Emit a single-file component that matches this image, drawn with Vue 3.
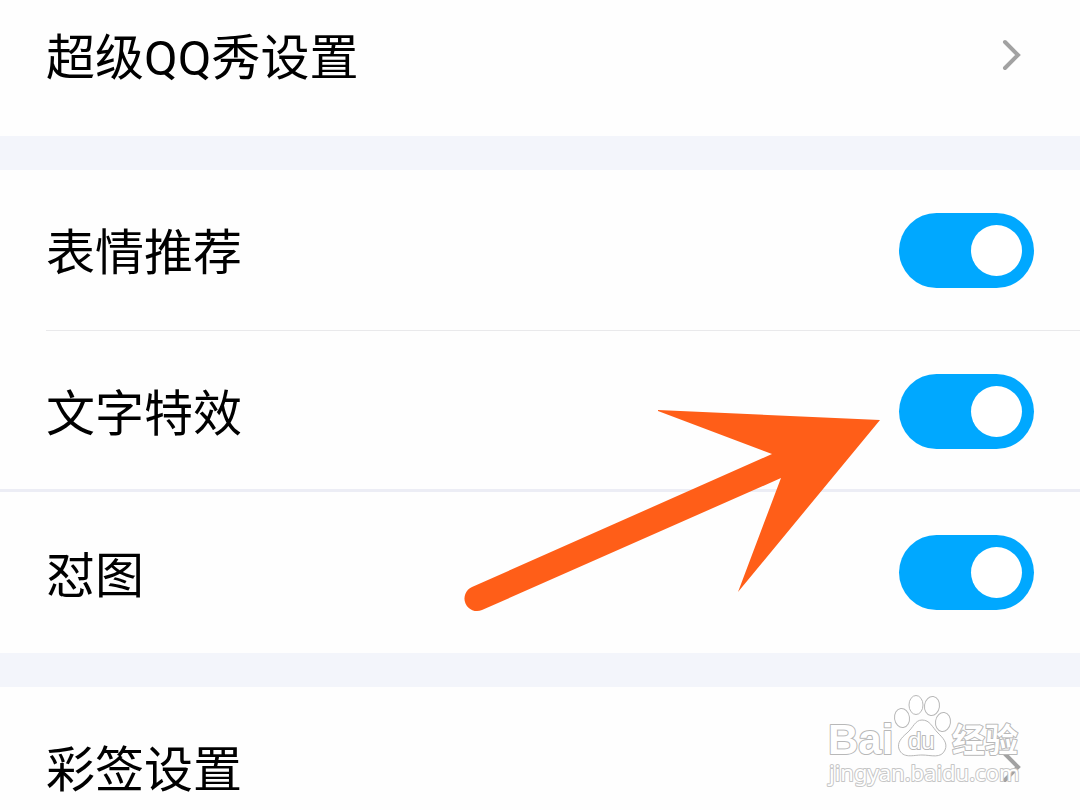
<script setup>
import { reactive } from 'vue'

const toggles = reactive([
  { id: 'emoji', label: '表情推荐', on: true },
  { id: 'effect', label: '文字特效', on: true },
  { id: 'meme', label: '怼图', on: true },
])
</script>

<template>
  <main class="page">
    <section class="group">
      <a class="row row-first" href="#show">
        <span class="label">超级QQ秀设置</span>
        <svg class="chevron" viewBox="0 0 20 32" aria-hidden="true">
          <path d="M4 3 L17 16 L4 29" />
        </svg>
      </a>
    </section>

    <section class="group">
      <div v-for="item in toggles" :key="item.id" class="row" :class="item.id">
        <label class="label" :for="item.id">{{ item.label }}</label>
        <input :id="item.id" v-model="item.on" class="switch" type="checkbox" role="switch" />
      </div>
    </section>

    <section class="group">
      <a class="row" href="#signature">
        <span class="label">彩签设置</span>
        <svg class="chevron" viewBox="0 0 20 32" aria-hidden="true">
          <path d="M4 3 L17 16 L4 29" />
        </svg>
      </a>
    </section>

    <svg class="arrow" viewBox="0 0 416 202" aria-hidden="true">
      <path d="M193 0 L415 10 L273 182 L316 68 L17 200 A12.500 12.500 0 0 1 7 177 L307 44 L193 1 Z" />
    </svg>

    <svg class="watermark" viewBox="0 0 200 100" role="img" aria-label="Baidu 经验">
      <g class="outline">
        <text class="brand" x="4" y="63">Bai</text>
        <ellipse cx="78" cy="27" rx="7.500" ry="9.500" transform="rotate(-8 78 27)" />
        <ellipse cx="92" cy="14" rx="7" ry="9.500" />
        <ellipse cx="108" cy="15" rx="7.500" ry="9.500" transform="rotate(8 108 15)" />
        <ellipse cx="119" cy="31" rx="7.500" ry="9.500" transform="rotate(8 119 31)" />
        <path d="M98 29 C91 29 89 37 83 42 C77 47 73 52 75 58 C79 68 89 64 98 64 C107 64 117 68 121 59 C124 52 119 47 114 42 C108 36 106 29 98 29 Z" />
        <text class="du" x="84" y="58">du</text>
        <text class="cn" x="128" y="61">经验</text>
        <text class="url" x="5" y="90">jingyan.baidu.com</text>
      </g>
    </svg>
  </main>
</template>

<style>
body {
  margin: 0;
}
</style>

<style scoped>
.page {
  position: relative;
  display: flex;
  flex-direction: column;
  gap: 34px;
  height: 100vh;
  overflow: hidden;
  background: #f3f5fb;
  font-family: Roboto, "Noto Sans CJK SC", sans-serif;
  color: #000;
}

.group {
  flex: none;
  background: #fefefe;
}

.row {
  display: flex;
  align-items: center;
  justify-content: space-between;
  box-sizing: border-box;
  height: 160px;
  padding: 0 46px;
  color: inherit;
  text-decoration: none;
}

.row-first {
  height: 136px;
  padding-bottom: 26px;
}

.emoji {
  height: 161px;
  margin-left: 46px;
  padding-left: 0;
  border-bottom: 1px solid #e9e9eb;
}

.effect {
  height: 161px;
  padding-top: 2px;
  border-bottom: 3px solid #ecedf5;
}

.meme {
  height: 161px;
}

.label {
  padding-top: 8px;
  font-size: 49px;
  line-height: 72px;
}

.chevron {
  width: 20px;
  height: 32px;
  margin-right: 13px;
  fill: none;
  stroke: #a2a2a2;
  stroke-width: 4px;
  stroke-linecap: round;
}

.switch {
  appearance: none;
  display: flex;
  align-items: center;
  box-sizing: border-box;
  width: 135px;
  height: 75px;
  margin: 0;
  padding: 0 12px;
  border-radius: 38px;
  background: #c8ccd4;
  cursor: pointer;
}

.switch::before {
  content: "";
  width: 51px;
  height: 51px;
  border-radius: 50%;
  background: #fff;
}

.switch:checked {
  justify-content: flex-end;
  background: #00a8ff;
}

.arrow {
  position: absolute;
  top: 410px;
  left: 465px;
  width: 416px;
  height: 202px;
  overflow: visible;
  fill: #ff5e18;
  pointer-events: none;
}

.watermark {
  position: absolute;
  top: 691px;
  left: 824px;
  width: 200px;
  height: 100px;
  pointer-events: none;
}

.outline {
  fill: #fff;
  stroke: #b8b8b8;
  stroke-width: 1px;
}

.outline text {
  font-family: "Liberation Sans", "Noto Sans CJK SC", sans-serif;
  paint-order: stroke;
  stroke-width: 2px;
  stroke-linejoin: round;
}

.outline .brand {
  font-size: 42px;
  font-weight: 700;
}

.outline .du {
  font-size: 24px;
}

.outline .cn {
  font-size: 33px;
  font-weight: 700;
}

.outline .url {
  font-family: "Noto Sans", sans-serif;
  font-size: 22px;
  stroke: #c6c6c6;
}
</style>
